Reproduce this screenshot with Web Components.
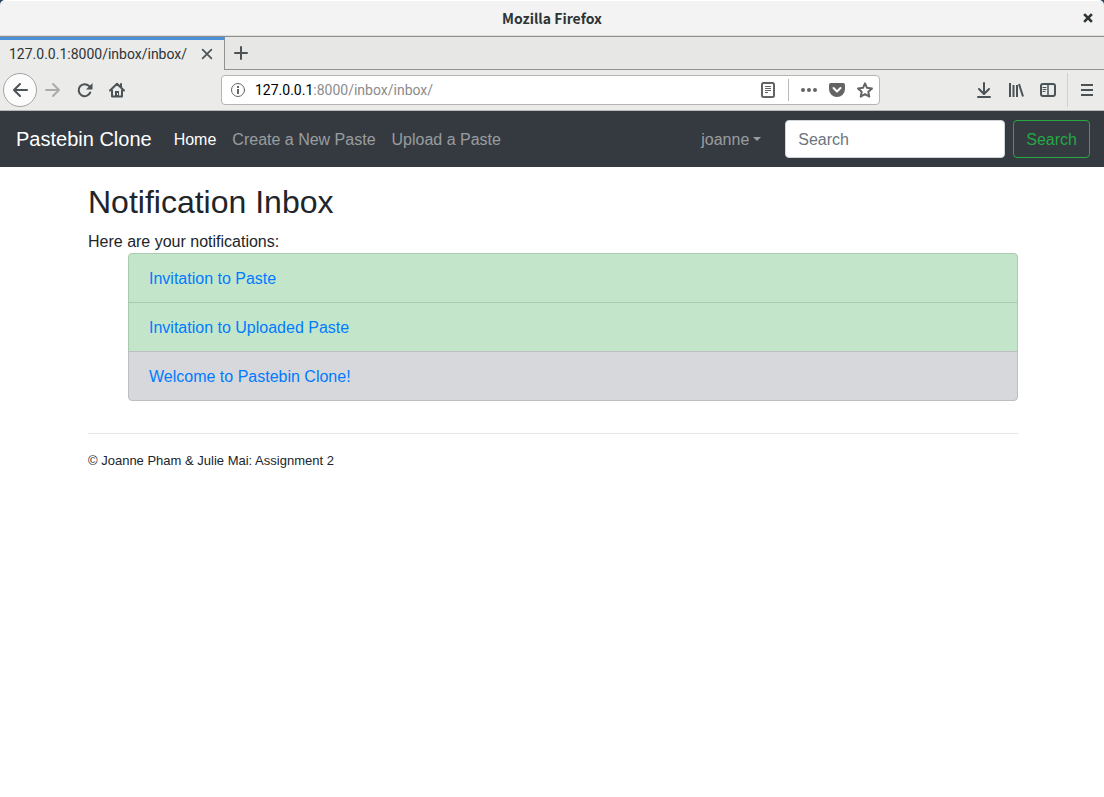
<!DOCTYPE html>
<html lang="en">
<head>
<meta charset="utf-8">
<title>Notification Inbox</title>
<style>
  html, body { margin: 0; min-height: 100%; }
  body { background: #fff; font: 16px/24px "Liberation Sans", Arial, sans-serif; color: #212529; }
</style>
</head>
<body>
<browser-window>
  <site-navbar></site-navbar>
  <inbox-page>
    <notice-item href="#paste" tone="unread">Invitation to Paste</notice-item>
    <notice-item href="#upload" tone="unread">Invitation to Uploaded Paste</notice-item>
    <notice-item href="#welcome" tone="read">Welcome to Pastebin Clone!</notice-item>
  </inbox-page>
</browser-window>

<script>
class BaseElement extends HTMLElement {
  constructor() {
    super();
    this.attachShadow({ mode: "open" }).innerHTML = this.constructor.markup;
  }
}

const ICONS = {
  back: '<path d="M15 8H2M8 2L2 8l6 6" />',
  forward: '<path d="M1 8h13M8 2l6 6-6 6" />',
  reload: '<path d="M13.2 10.5A6 6 0 1 1 12 4" /><path d="M15.5 1v6.5H9z" fill="currentColor" stroke="none" />',
  home: '<path d="M1 8.5L8 1.8l7 6.7M3 8v6.5h10V8M12 2v3" /><path d="M6 15V9h4v6z" fill="currentColor" stroke="none" /><path d="M8.500 11v2" stroke="#ebebea" stroke-width="1" stroke-linecap="butt" />',
  info: '<circle cx="8" cy="8" r="6.5" stroke-width="1" /><path d="M8 7v5M8 4v2" stroke-width="2" stroke-linecap="butt" />',
  reader: '<rect x="2" y="1" width="12" height="14" rx="1.5" /><path d="M5 4.5h6M5 6.5h6M5 8.5h6M5 10.500h3" stroke-width="1" stroke-linecap="butt" />',
  dots: '<g fill="currentColor" stroke="none"><circle cx="2" cy="8" r="2" /><circle cx="8" cy="8" r="2" /><circle cx="14" cy="8" r="2" /></g>',
  pocket: '<path d="M2 1h12q2 0 2 2v4a8 8 0 0 1-16 0V3q0-2 2-2z" fill="currentColor" stroke="none" /><path d="M4.500 6L8 9.500 11.500 6" stroke="#fff" />',
  star: '<path d="M8 1.300l2 4.500 5 .6-3.700 3.300 1 4.900L8 12.100l-4.300 2.500 1-4.900L1 6.400l5-.6z" stroke-width="2" />',
  download: '<path d="M8 1v10M3 7l5 5 5-5M2 15h12" />',
  library: '<path d="M2 1v14M5.500 3v12M9 3v12M11 2l4 12.500" stroke-linecap="butt" />',
  sidebar: '<rect x="1" y="2" width="14" height="12" rx="2" /><path d="M8 2v12" stroke-width="1.500" /><path d="M3 5.500h3M3 7.500h3M3 9.500h2" stroke-width="1" />',
  menu: '<path d="M2 3h12M2 8h12M2 13h12" stroke-linecap="butt" />',
  close: '<path d="M3 3l10 10M13 3L3 13" />',
  closebold: '<path d="M5 5l6 6M11 5l-6 6" stroke-width="2.500" stroke-linecap="square" />',
  plus: '<path d="M8 2v12M2 8h12" />'
};

class UiIcon extends HTMLElement {
  constructor() {
    super();
    this.attachShadow({ mode: "open" });
  }
  connectedCallback() {
    this.shadowRoot.innerHTML = `
      <style>
        :host { display: block; width: 16px; height: 16px; flex: none; }
        svg { display: block; width: 100%; height: 100%; overflow: visible; fill: none;
              stroke: currentColor; stroke-width: 2; stroke-linecap: round; stroke-linejoin: round; }
      </style>
      <svg viewBox="0 0 16 16" aria-hidden="true">${ICONS[this.getAttribute("name")]}</svg>`;
  }
}
customElements.define("ui-icon", UiIcon);

class BrowserWindow extends BaseElement {
  static markup = `
    <style>
      :host { display: block; background: linear-gradient(#1f3f5b 0 8px, #fff 8px); }
      .chrome { font: 14px/20px Roboto, "Noto Sans", sans-serif; color: #4c5356; }
      button { all: unset; display: flex; align-items: center; justify-content: center; box-sizing: border-box; cursor: pointer; }
      .title { display: grid; grid-template-columns: 32px 1fr 32px; align-items: center; height: 37px; box-sizing: border-box;
               background: #f3f3f3; border-top: 1px solid #fff; border-bottom: 1px solid #8e8f8a;
               border-radius: 5px 5px 0 0; box-shadow: inset 0 -1px #dcdcda; }
      .title strong { grid-column: 2; padding-bottom: 2px; text-align: center; font: bold 14px/20px "Noto Sans CJK SC", "Noto Sans", sans-serif; color: #2e3436; }
      .title button { height: 32px; padding-bottom: 2px; color: #2e3436; }
      .tabs { display: flex; height: 33px; box-sizing: border-box; background: #e7e7e6; box-shadow: inset 0 -1px #919190; }
      .tab { display: flex; align-items: center; justify-content: space-between; width: 225px; box-sizing: border-box;
             padding: 0 10px 2px 9px; border-top: 3px solid #4a90d9; border-right: 1px solid #919190;
             background: #ebebea; color: #2e3436; white-space: nowrap; }
      .tab ui-icon { width: 14px; height: 14px; }
      .tab button { color: #4c5356; }
      .new { width: 32px; padding-bottom: 2px; }
      .tools { display: flex; align-items: center; height: 41px; box-sizing: border-box; padding: 0 1px 0 3px;
               background: #ebebea; border-bottom: 1px solid #b9b9b8; }
      .tools button { width: 32px; height: 32px; }
      .tools .back { width: 34px; height: 34px; border: 1px solid #a4a4a3; border-radius: 50%; background: #fcfcfc; }
      .tools .off { color: #aaabab; }
      .address { display: flex; align-items: center; flex: 0 1 659px; min-width: 0; height: 30px; box-sizing: border-box; margin: 0 auto 0 88px;
                 padding: 0 6px 0 8px; border: 1px solid #b5b5b4; border-radius: 4px; background: #fff; color: #646464; }
      .url { flex: 1; margin-left: 9px; color: #8b8b8b; white-space: nowrap; }
      .url b { font-weight: normal; color: #000; }
      .address button { width: 28px; height: 28px; }
      .address .page { width: 24px; margin-right: 8px; }
      .address i { width: 1px; height: 22px; background: #b9b9b9; margin-right: 6px; }
      .address .last { width: 16px; margin-left: 6px; }
      .tools hr { width: 1px; height: 34px; margin: 0 3px; border: 0; background: #d0d0cf; }
    </style>
    <header class="chrome">
      <div class="title"><strong>Mozilla Firefox</strong><button aria-label="Close window"><ui-icon name="closebold"></ui-icon></button></div>
      <div class="tabs">
        <div class="tab"><span>127.0.0.1:8000/inbox/inbox/</span><button aria-label="Close tab"><ui-icon name="close"></ui-icon></button></div>
        <button class="new" aria-label="New tab"><ui-icon name="plus"></ui-icon></button>
      </div>
      <div class="tools">
        <button class="back" aria-label="Back"><ui-icon name="back"></ui-icon></button>
        <button class="off" aria-label="Forward"><ui-icon name="forward"></ui-icon></button>
        <button aria-label="Reload"><ui-icon name="reload"></ui-icon></button>
        <button aria-label="Home"><ui-icon name="home"></ui-icon></button>
        <div class="address">
          <ui-icon name="info"></ui-icon>
          <span class="url"><b>127.0.0.1</b>:8000/inbox/inbox/</span>
          <button class="page" aria-label="Reader view"><ui-icon name="reader"></ui-icon></button>
          <i></i>
          <button aria-label="Page actions"><ui-icon name="dots"></ui-icon></button>
          <button aria-label="Save to Pocket"><ui-icon name="pocket"></ui-icon></button>
          <button class="last" aria-label="Bookmark"><ui-icon name="star"></ui-icon></button>
        </div>
        <button aria-label="Downloads"><ui-icon name="download"></ui-icon></button>
        <button aria-label="Library"><ui-icon name="library"></ui-icon></button>
        <button aria-label="Sidebars"><ui-icon name="sidebar"></ui-icon></button>
        <hr>
        <button aria-label="Menu"><ui-icon name="menu"></ui-icon></button>
      </div>
    </header>
    <slot></slot>`;
}
customElements.define("browser-window", BrowserWindow);

class SiteNavbar extends BaseElement {
  static markup = `
    <style>
      :host { display: block; background: #343a40; }
      nav, ul, form { display: flex; align-items: center; }
      nav { min-height: 56px; box-sizing: border-box; padding: 0 14px 0 16px; }
      a { display: block; color: rgba(255, 255, 255, .5); text-decoration: none; white-space: nowrap; }
      .brand { margin-right: 14px; font-size: 20px; line-height: 30px; color: #fff; }
      ul { flex: 1; margin: 0; padding: 0; list-style: none; }
      li a { padding: 9px 8px 7px; }
      li .active { color: #fff; }
      .user { margin-left: auto; margin-right: 16px; }
      .user a { display: flex; align-items: center; }
      .user a::after { content: ""; margin: 0 0 3px 4px; border: 4px solid transparent; border-top-color: currentColor; border-bottom: 0; }
      form { gap: 8px; }
      input, button { height: 38px; box-sizing: border-box; padding: 7px 12px 5px; border-radius: 4px; font: inherit; }
      input { width: 220px; border: 1px solid #ced4da; background: #fff; color: #495057; }
      input::placeholder { color: #6c757d; opacity: 1; }
      button { border: 1px solid #28a745; background: transparent; color: #28a745; }
    </style>
    <nav>
      <a class="brand" href="#">Pastebin Clone</a>
      <ul>
        <li><a class="active" href="#">Home</a></li>
        <li><a href="#create">Create a New Paste</a></li>
        <li><a href="#upload">Upload a Paste</a></li>
        <li class="user"><a href="#user">joanne</a></li>
      </ul>
      <form><input type="search" placeholder="Search" aria-label="Search"><button type="button">Search</button></form>
    </nav>`;
}
customElements.define("site-navbar", SiteNavbar);

class InboxPage extends BaseElement {
  static markup = `
    <style>
      :host { display: block; max-width: 960px; box-sizing: border-box; margin: 0 auto; padding: 16px 14px 16px 16px; background: #fff; }
      h2 { margin: 0 0 10px; font-size: 32px; line-height: 38px; font-weight: normal; }
      .intro { line-height: 22px; }
      .list { margin-left: 40px; }
      hr { margin: 32px 0 16px; border: 0; border-top: 1px solid #e5e5e5; }
      footer { font-size: 13px; line-height: 22px; }
    </style>
    <main>
      <h2>Notification Inbox</h2>
      <div class="intro">Here are your notifications:</div>
      <div class="list"><slot></slot></div>
    </main>
    <hr>
    <footer>© Joanne Pham &amp; Julie Mai: Assignment 2</footer>`;
}
customElements.define("inbox-page", InboxPage);

class NoticeItem extends BaseElement {
  static markup = `
    <style>
      :host { display: block; box-sizing: border-box; padding: 13px 20px 11px; border: 1px solid #a9c9b1; background: #c3e6cb; }
      :host([tone="read"]) { background: #d6d8db; border-color: #bcbec1; }
      :host(:not(:first-child)) { margin-top: -1px; }
      :host(:first-child) { border-radius: 4px 4px 0 0; }
      :host(:last-child) { border-radius: 0 0 4px 4px; }
      a { color: #007bff; text-decoration: none; }
    </style>
    <a><slot></slot></a>`;
  connectedCallback() {
    this.shadowRoot.querySelector("a").href = this.getAttribute("href");
  }
}
customElements.define("notice-item", NoticeItem);
</script>
</body>
</html>
